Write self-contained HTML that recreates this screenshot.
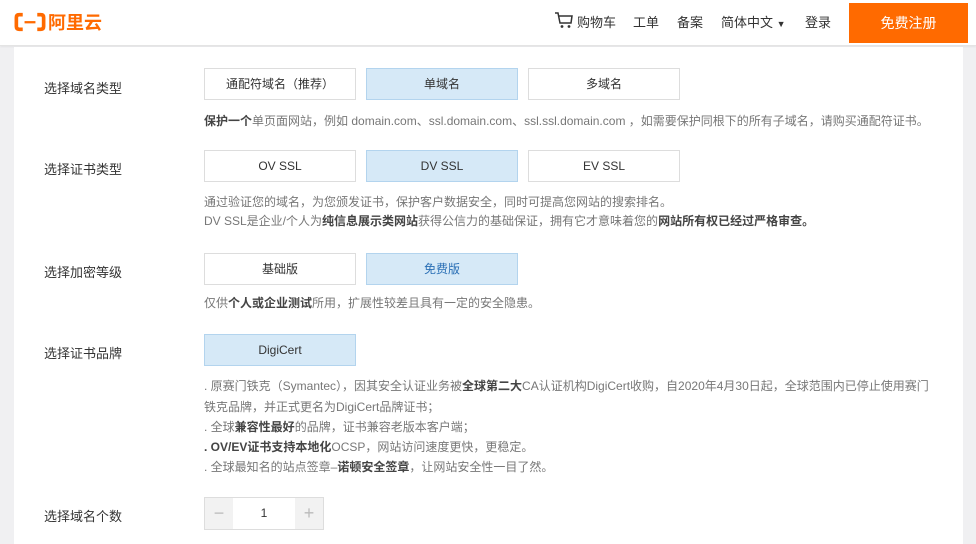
<!DOCTYPE html><html><head><meta charset="utf-8"><style>
*{margin:0;padding:0;box-sizing:border-box}
body{width:976px;height:544px;overflow:hidden;background:#f0f0f2;font-family:"Liberation Sans","Noto Sans CJK SC",sans-serif;position:relative;color:#333}
.hd{position:absolute;left:0;top:0;width:976px;height:46px;background:#fff;border-bottom:1px solid #e4e4e4;box-shadow:0 1px 2px rgba(0,0,0,.06)}
.logo{position:absolute;left:14px;top:8px;height:28px;display:flex;align-items:center;color:#ff6a00;font-size:18px;font-weight:bold}
.nav{position:absolute;top:12px;font-size:13px;color:#333}
.reg{position:absolute;left:849px;top:3px;width:119px;height:40px;background:#ff6a00;color:#fff;font-size:14px;text-align:center;line-height:40px}
.main{position:absolute;left:14px;top:47px;width:949px;height:497px;background:#fff}
.lab{position:absolute;left:44px;font-size:13px;color:#333}
.b{position:absolute;width:152px;height:32px;border:1px solid #ddd;background:#fff;font-size:12px;text-align:center;line-height:30px;color:#333}
.b.s{background:#d6e9f7;border-color:#b3d4ee}
.t{position:absolute;left:204px;font-size:12px;color:#777;white-space:nowrap}
.t b{color:#444}
</style></head><body>
<div class="hd">
<div class="logo"><svg width="32" height="20" viewBox="0 0 34 22"><path d="M9 3H5Q2 3 2 6V16Q2 19 5 19H9" fill="none" stroke="#ff6a00" stroke-width="4"/><path d="M25 3H29Q32 3 32 6V16Q32 19 29 19H25" fill="none" stroke="#ff6a00" stroke-width="4"/><rect x="11" y="10" width="12" height="2.5" fill="#ff6a00"/></svg><span style="margin-left:2px">阿里云</span></div>
<svg style="position:absolute;left:554px;top:11px" width="20" height="18" viewBox="0 0 20 18"><path d="M1 2H4L6 12H17L18 5H5" fill="none" stroke="#333" stroke-width="1.5"/><circle cx="8" cy="15.5" r="1.4" fill="#333"/><circle cx="15" cy="15.5" r="1.4" fill="#333"/></svg>
<div class="nav" style="left:577px">购物车</div>
<div class="nav" style="left:633px">工单</div>
<div class="nav" style="left:677px">备案</div>
<div class="nav" style="left:721px">简体中文 <span style="font-size:9px">▼</span></div>
<div class="nav" style="left:805px">登录</div>
<div class="reg">免费注册</div>
</div>
<div class="main"></div>
<div class="lab" style="top:78px">选择域名类型</div>
<div class="b" style="left:204px;top:68px">通配符域名（推荐）</div>
<div class="b s" style="left:366px;top:68px">单域名</div>
<div class="b" style="left:528px;top:68px">多域名</div>
<div class="t" style="top:112px"><b>保护一个</b>单页面网站，例如 domain.com、ssl.domain.com、ssl.ssl.domain.com ，如需要保护同根下的所有子域名，请购买通配符证书。</div>
<div class="lab" style="top:159px">选择证书类型</div>
<div class="b" style="left:204px;top:150px">OV SSL</div>
<div class="b s" style="left:366px;top:150px">DV SSL</div>
<div class="b" style="left:528px;top:150px">EV SSL</div>
<div class="t" style="top:193px">通过验证您的域名，为您颁发证书，保护客户数据安全，同时可提高您网站的搜索排名。</div>
<div class="t" style="top:212px">DV SSL是企业/个人为<b>纯信息展示类网站</b>获得公信力的基础保证，拥有它才意味着您的<b>网站所有权已经过严格审查。</b></div>
<div class="lab" style="top:262px">选择加密等级</div>
<div class="b" style="left:204px;top:253px">基础版</div>
<div class="b s" style="left:366px;top:253px;color:#2a6fb5">免费版</div>
<div class="t" style="top:294px">仅供<b>个人或企业测试</b>所用，扩展性较差且具有一定的安全隐患。</div>
<div class="lab" style="top:343px">选择证书品牌</div>
<div class="b s" style="left:204px;top:334px">DigiCert</div>
<div class="t" style="top:377px">. 原赛门铁克（Symantec），因其安全认证业务被<b>全球第二大</b>CA认证机构DigiCert收购，自2020年4月30日起，全球范围内已停止使用赛门</div>
<div class="t" style="top:398px">铁克品牌，并正式更名为DigiCert品牌证书；</div>
<div class="t" style="top:418px">. 全球<b>兼容性最好</b>的品牌，证书兼容老版本客户端；</div>
<div class="t" style="top:438px"><b>. OV/EV证书支持本地化</b>OCSP，网站访问速度更快，更稳定。</div>
<div class="t" style="top:458px">. 全球最知名的站点签章–<b>诺顿安全签章</b>，让网站安全性一目了然。</div>
<div class="lab" style="top:506px">选择域名个数</div>
<div style="position:absolute;left:204px;top:497px;width:120px;height:33px;border:1px solid #ddd;background:#fff">
<div style="position:absolute;left:0;top:0;width:28px;height:31px;background:#f2f2f2;color:#bbb;text-align:center;line-height:30px;font-size:18px">−</div>
<div style="position:absolute;left:28px;width:62px;top:0;line-height:31px;text-align:center;font-size:12px">1</div>
<div style="position:absolute;right:0;top:0;width:28px;height:31px;background:#f2f2f2;color:#bbb;text-align:center;line-height:30px;font-size:18px">+</div>
</div>
</body></html>
